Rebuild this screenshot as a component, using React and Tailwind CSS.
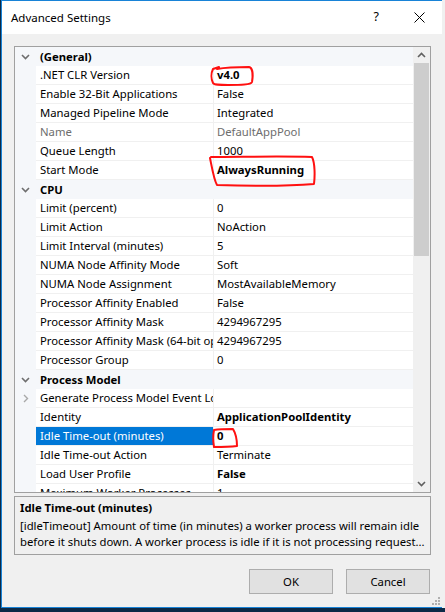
import React from 'react';

const FONT = "font-['Segoe_UI','Noto_Sans',sans-serif]";

const ROWS = [
  { cat: '(General)' },
  { name: '.NET CLR Version', value: 'v4.0', bold: true },
  { name: 'Enable 32-Bit Applications', value: 'False' },
  { name: 'Managed Pipeline Mode', value: 'Integrated' },
  { name: 'Name', value: 'DefaultAppPool', dim: true },
  { name: 'Queue Length', value: '1000' },
  { name: 'Start Mode', value: 'AlwaysRunning', bold: true },
  { cat: 'CPU' },
  { name: 'Limit (percent)', value: '0' },
  { name: 'Limit Action', value: 'NoAction' },
  { name: 'Limit Interval (minutes)', value: '5' },
  { name: 'NUMA Node Affinity Mode', value: 'Soft' },
  { name: 'NUMA Node Assignment', value: 'MostAvailableMemory' },
  { name: 'Processor Affinity Enabled', value: 'False' },
  { name: 'Processor Affinity Mask', value: '4294967295' },
  { name: 'Processor Affinity Mask (64-bit option)', value: '4294967295' },
  { name: 'Processor Group', value: '0' },
  { cat: 'Process Model' },
  { name: 'Generate Process Model Event Log Entry', value: '', expander: true },
  { name: 'Identity', value: 'ApplicationPoolIdentity', bold: true },
  { name: 'Idle Time-out (minutes)', value: '0', bold: true, selected: true },
  { name: 'Idle Time-out Action', value: 'Terminate' },
  { name: 'Load User Profile', value: 'False', bold: true },
  { name: 'Maximum Worker Processes', value: '1' },
];

function CatRow({ label }) {
  return (
    <div className="flex h-[19px] shrink-0 bg-[#f5f7fa] items-center">
      <div className="w-[21px] flex justify-center">
        <svg width="9" height="6" viewBox="0 0 9 6">
          <polyline points="1,1 4.5,4.5 8,1" fill="none" stroke="#6e6e6e" strokeWidth="1.6" />
        </svg>
      </div>
      <span className="pl-[4px] font-bold text-black">{label}</span>
    </div>
  );
}

function PropRow({ name, value, bold, dim, selected, expander }) {
  return (
    <div className="flex h-[19px] shrink-0">
      <div className="w-[21px] bg-[#f5f7fa] flex items-center justify-center">
        {expander && (
          <svg width="6" height="9" viewBox="0 0 6 9">
            <polyline points="1,1 4.5,4.5 1,8" fill="none" stroke="#a8a8a8" strokeWidth="1.4" />
          </svg>
        )}
      </div>
      <div
        className={`w-[177px] border-b border-[#f0f0f0] pl-[4px] flex items-center overflow-hidden whitespace-nowrap ${
          selected ? 'bg-[#0078d7] text-white' : dim ? 'bg-white text-[#6d6d6d]' : 'bg-white text-black'
        }`}
      >
        {name}
      </div>
      <div className="w-px bg-[#f0f0f0]" />
      <div
        className={`flex-1 bg-white border-b border-[#f0f0f0] pl-[3px] flex items-center overflow-hidden whitespace-nowrap ${
          bold ? 'font-bold text-black' : dim ? 'text-[#6d6d6d]' : 'text-black'
        }`}
      >
        {value}
      </div>
    </div>
  );
}

function Scrollbar() {
  return (
    <div className="w-[17px] bg-[#f0f0f0] flex flex-col">
      <div className="h-[16px] flex items-center justify-center">
        <svg width="9" height="6" viewBox="0 0 9 6">
          <polyline points="1,5 4.5,1.5 8,5" fill="none" stroke="#606060" strokeWidth="1.6" />
        </svg>
      </div>
      <div className="h-[193px] mx-px bg-[#cdcdcd]" />
      <div className="flex-1" />
      <div className="h-[16px] flex items-center justify-center">
        <svg width="9" height="6" viewBox="0 0 9 6">
          <polyline points="1,1 4.5,4.5 8,1" fill="none" stroke="#606060" strokeWidth="1.6" />
        </svg>
      </div>
    </div>
  );
}

function Marks() {
  return (
    <svg className="absolute left-0 top-0 pointer-events-none" width="445" height="612" viewBox="0 0 445 612">
      <g fill="none" stroke="#ff1010" strokeWidth="2" strokeLinecap="round" strokeLinejoin="round">
        <path d="M217 69 C228 67 240 67 249 67 C253 68 253 76 252 82 C251 85 240 85 228 85 C220 85 214 85 213 83 C211 79 211 73 213 69 L219 67" />
        <path d="M211 157 C240 157 280 156 312 157 C315 163 315 176 314 184 C290 186 250 186 217 185 C214 180 212 168 210 158" />
        <path d="M214 430 C220 429 228 429 233 429 C236 434 237 440 237 446 C229 447 221 447 214 447 C213 441 213 435 214 430" />
      </g>
    </svg>
  );
}

export default function App() {
  return (
    <div className={`relative w-[445px] h-[612px] bg-[#0c2a47] overflow-hidden text-[11.3px] leading-none ${FONT}`}>
      <div className="absolute right-0 top-0 w-[3px] h-[608px] bg-[#f0f0f0]" />
      <div className="ml-px w-[442px] h-[608px] border border-[#1883d7] bg-[#f0f0f0] flex flex-col">
        {/* title bar */}
        <div className="h-[33px] bg-white flex items-center shrink-0">
          <span className="pl-[9px] text-black text-[11.5px]">Advanced Settings</span>
          <span className="ml-auto mr-[35px] text-[12.5px] text-black">?</span>
          <svg className="mr-[17px]" width="11" height="11" viewBox="0 0 11 11">
            <path d="M0.5 0.5 L10.5 10.5 M10.5 0.5 L0.5 10.5" stroke="#000" strokeWidth="1" />
          </svg>
        </div>

        <div className="pl-[12px] pr-[11px] pt-[12px] flex flex-col">
          {/* property grid */}
          <div className="h-[447px] border border-[#a0a0a0] flex bg-white">
            <div className="flex-1 flex flex-col overflow-hidden">
              {ROWS.map((r, i) =>
                r.cat ? <CatRow key={i} label={r.cat} /> : <PropRow key={i} {...r} />
              )}
            </div>
            <Scrollbar />
          </div>

          {/* description */}
          <div className="mt-[3px] h-[59px] border border-[#a0a0a0] px-[5px] pt-[3px] text-black">
            <div className="font-bold h-[16px] flex items-center">Idle Time-out (minutes)</div>
            <div className="mt-[2px] h-[16px] flex items-center whitespace-nowrap overflow-hidden">
              [idleTimeout] Amount of time (in minutes) a worker process will remain idle
            </div>
            <div className="h-[16px] flex items-center whitespace-nowrap overflow-hidden">
              before it shuts down. A worker process is idle if it is not processing request...
            </div>
          </div>

          {/* buttons */}
          <div className="mt-[14px] flex justify-end gap-[13px] pr-px">
            <button className="w-[84px] h-[25px] bg-[#e1e1e1] border border-[#adadad] text-black">OK</button>
            <button className="w-[84px] h-[25px] bg-[#e1e1e1] border border-[#adadad] text-black">Cancel</button>
          </div>
        </div>
      </div>

      {/* resize grip */}
      <svg className="absolute left-[431px] top-[596px]" width="10" height="10" viewBox="0 0 10 10">
        <g fill="#b0b0b0">
          <rect x="7" y="1" width="2" height="2" />
          <rect x="4" y="4" width="2" height="2" />
          <rect x="7" y="4" width="2" height="2" />
          <rect x="1" y="7" width="2" height="2" />
          <rect x="4" y="7" width="2" height="2" />
          <rect x="7" y="7" width="2" height="2" />
        </g>
      </svg>

      <Marks />
    </div>
  );
}
